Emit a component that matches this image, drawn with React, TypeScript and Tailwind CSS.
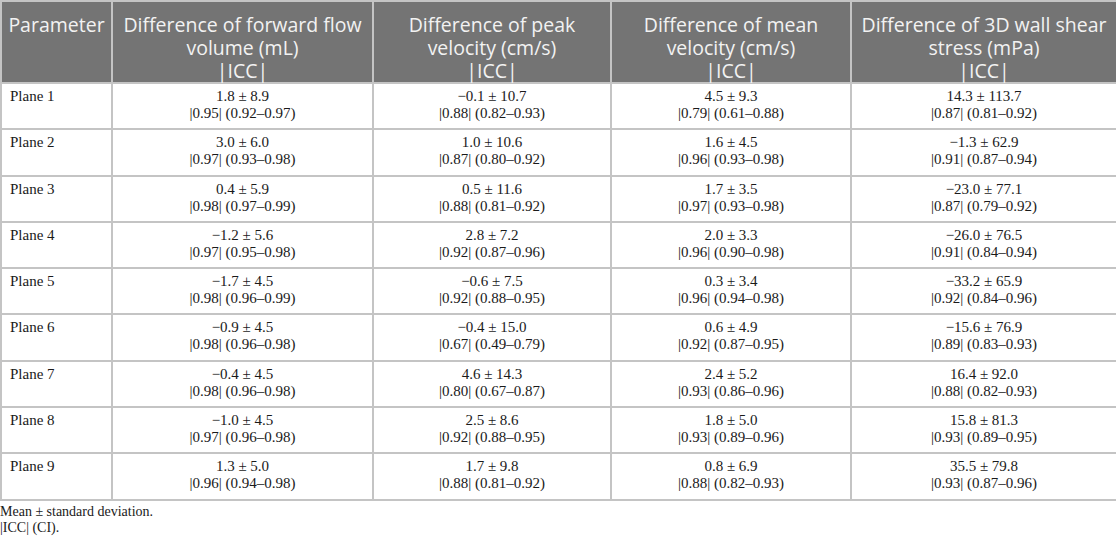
const HEAD: string[][] = [
  ['Parameter'],
  ['Difference of forward flow', 'volume (mL)', '|ICC|'],
  ['Difference of peak', 'velocity (cm/s)', '|ICC|'],
  ['Difference of mean', 'velocity (cm/s)', '|ICC|'],
  ['Difference of 3D wall shear', 'stress (mPa)', '|ICC|'],
];

const WIDTHS = ['w-[111px]', 'w-[261px]', 'w-[238px]', 'w-[240px]', 'w-[266px]'];

// [mean ± sd, |icc|, ci] per column
const ROWS: [string, string, string][][] = [
  [['1.8 ± 8.9', '0.95', '0.92–0.97'], ['−0.1 ± 10.7', '0.88', '0.82–0.93'], ['4.5 ± 9.3', '0.79', '0.61–0.88'], ['14.3 ± 113.7', '0.87', '0.81–0.92']],
  [['3.0 ± 6.0', '0.97', '0.93–0.98'], ['1.0 ± 10.6', '0.87', '0.80–0.92'], ['1.6 ± 4.5', '0.96', '0.93–0.98'], ['−1.3 ± 62.9', '0.91', '0.87–0.94']],
  [['0.4 ± 5.9', '0.98', '0.97–0.99'], ['0.5 ± 11.6', '0.88', '0.81–0.92'], ['1.7 ± 3.5', '0.97', '0.93–0.98'], ['−23.0 ± 77.1', '0.87', '0.79–0.92']],
  [['−1.2 ± 5.6', '0.97', '0.95–0.98'], ['2.8 ± 7.2', '0.92', '0.87–0.96'], ['2.0 ± 3.3', '0.96', '0.90–0.98'], ['−26.0 ± 76.5', '0.91', '0.84–0.94']],
  [['−1.7 ± 4.5', '0.98', '0.96–0.99'], ['−0.6 ± 7.5', '0.92', '0.88–0.95'], ['0.3 ± 3.4', '0.96', '0.94–0.98'], ['−33.2 ± 65.9', '0.92', '0.84–0.96']],
  [['−0.9 ± 4.5', '0.98', '0.96–0.98'], ['−0.4 ± 15.0', '0.67', '0.49–0.79'], ['0.6 ± 4.9', '0.92', '0.87–0.95'], ['−15.6 ± 76.9', '0.89', '0.83–0.93']],
  [['−0.4 ± 4.5', '0.98', '0.96–0.98'], ['4.6 ± 14.3', '0.80', '0.67–0.87'], ['2.4 ± 5.2', '0.93', '0.86–0.96'], ['16.4 ± 92.0', '0.88', '0.82–0.93']],
  [['−1.0 ± 4.5', '0.97', '0.96–0.98'], ['2.5 ± 8.6', '0.92', '0.88–0.95'], ['1.8 ± 5.0', '0.93', '0.89–0.96'], ['15.8 ± 81.3', '0.93', '0.89–0.95']],
  [['1.3 ± 5.0', '0.96', '0.94–0.98'], ['1.7 ± 9.8', '0.88', '0.81–0.92'], ['0.8 ± 6.9', '0.88', '0.82–0.93'], ['35.5 ± 79.8', '0.93', '0.87–0.96']],
];

const serif = 'font-["Liberation_Serif",serif]';

export default function App() {
  return (
    <div className="w-[1116px] h-[548px] bg-white overflow-hidden">
      <table className="w-[1116px] table-fixed border-collapse">
        <thead>
          <tr className="h-[82px] bg-[#747474]">
            {HEAD.map((lines, i) => (
              <th
                key={i}
                className={`${WIDTHS[i]} border-2 border-[#c4c4c4] px-1 pt-[11px] pb-0 align-top text-center font-normal text-[19.5px] leading-[23px] text-[#f2f2f2] font-["Open_Sans",sans-serif] whitespace-nowrap`}
              >
                {lines.map((l) => (
                  <div key={l}>{l}</div>
                ))}
              </th>
            ))}
          </tr>
        </thead>
        <tbody className={`${serif} text-[15px] leading-[16px] text-[#1a1a1a]`}>
          {ROWS.map((row, r) => (
            <tr key={r} className="h-[46.3px]">
              <td className="border-2 border-[#c4c4c4] px-2 pt-[4px] align-top">Plane {r + 1}</td>
              {row.map(([v, icc, ci], c) => (
                <td key={c} className="border-2 border-[#c4c4c4] pt-[4px] pb-[3px] align-top text-center">
                  <div>{v}</div>
                  <div className="mt-[1px]">
                    |{icc}| ({ci})
                  </div>
                </td>
              ))}
            </tr>
          ))}
        </tbody>
      </table>
      <div className={`${serif} mt-[3px] text-[14px] leading-[16px] text-[#1a1a1a]`}>
        <p>Mean ± standard deviation.</p>
        <p>|ICC| (CI).</p>
      </div>
    </div>
  );
}
